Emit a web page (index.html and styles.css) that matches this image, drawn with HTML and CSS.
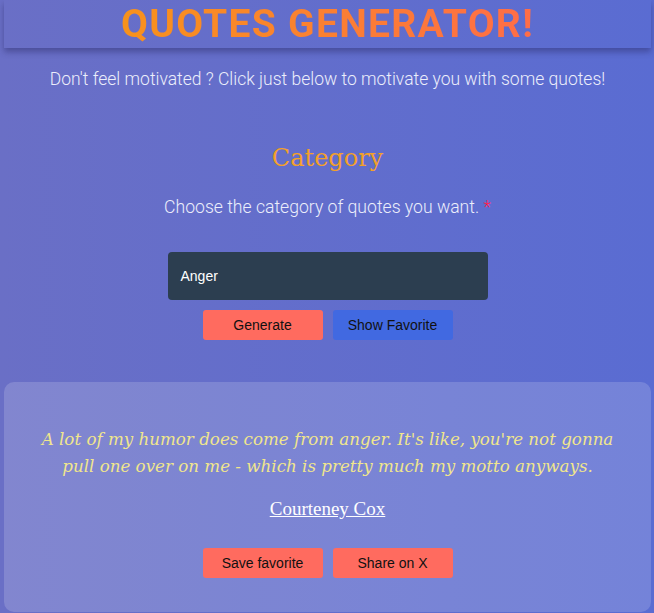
FILE: index.html
```html
<!DOCTYPE html>
<html>
<head>
<meta charset="utf-8">
<link rel="stylesheet" href="styles.css">
</head>
<body>
<div class="page">
  <header class="topbar">
    <h1 class="title">QUOTES GENERATOR!</h1>
  </header>
  <p class="subtitle">Don't feel motivated ? Click just below to motivate you with some quotes!</p>
  <h2 class="category">Category</h2>
  <p class="choose">Choose the category of quotes you want. <span class="req">*</span></p>
  <div class="select">Anger</div>
  <div class="actions">
    <button class="btn btn-red">Generate</button>
    <button class="btn btn-blue">Show Favorite</button>
  </div>
  <section class="card">
    <p class="quote">A lot of my humor does come from anger. It's like, you're not gonna pull one over on me - which is pretty much my motto anyways.</p>
    <a class="author">Courteney Cox</a>
    <div class="actions card-actions">
      <button class="btn btn-red">Save favorite</button>
      <button class="btn btn-red">Share on X</button>
    </div>
  </section>
</div>
</body>
</html>
```
FILE: styles.css
```css
html, body {
  margin: 0;
  padding: 0;
  height: 100%;
}
body {
  background: linear-gradient(to right, #6a6fc6, #5a6cd2);
  font-family: Roboto, "Liberation Sans", sans-serif;
  overflow: hidden;
}
.page {
  padding: 0 3px 0 4px;
  display: flex;
  flex-direction: column;
  align-items: stretch;
}
.topbar {
  height: 48px;
  box-shadow: 0 4px 6px rgba(40, 40, 100, 0.45);
  display: flex;
  justify-content: center;
  align-items: center;
}
.title {
  margin: 0;
  font-family: Roboto, sans-serif;
  font-weight: 700;
  font-size: 39px;
  line-height: 48px;
  letter-spacing: 1.3px;
  background: linear-gradient(to right, #f7921c, #ff6d48);
  -webkit-background-clip: text;
  background-clip: text;
  color: transparent;
}
.subtitle {
  margin: 20px 0 0;
  text-align: center;
  font-weight: 300;
  font-size: 17.5px;
  line-height: 22px;
  color: #eceefb;
}
.category {
  margin: 52px 0 0;
  text-align: center;
  font-family: "DejaVu Serif", serif;
  font-weight: 400;
  font-size: 24px;
  line-height: 32px;
  color: #f3a02a;
}
.choose {
  margin: 22px 0 0;
  text-align: center;
  font-weight: 300;
  font-size: 17.6px;
  line-height: 22px;
  color: #eceefb;
}
.req {
  color: #ff1f4f;
}
.select {
  margin: 34px auto 0;
  width: 320px;
  height: 48px;
  box-sizing: border-box;
  padding: 0 13px;
  display: flex;
  align-items: center;
  background: #2c3e50;
  border-radius: 4px;
  color: #fff;
  font-family: "Liberation Sans", Arial, sans-serif;
  font-size: 14px;
}
.actions {
  margin-top: 10px;
  display: flex;
  justify-content: center;
  gap: 10px;
}
.btn {
  width: 120px;
  height: 30px;
  border: none;
  border-radius: 3px;
  font-family: "Liberation Sans", Arial, sans-serif;
  font-size: 14px;
  color: #111;
  padding: 0;
}
.btn-red {
  background: #ff6b5f;
}
.btn-blue {
  background: #4169e1;
}
.card {
  margin-top: 42px;
  height: 230px;
  box-sizing: border-box;
  padding: 44px 30px 0;
  background: rgba(255, 255, 255, 0.16);
  border-radius: 10px;
  display: flex;
  flex-direction: column;
  align-items: center;
}
.quote {
  margin: 0;
  text-align: center;
  font-family: "DejaVu Serif", serif;
  font-style: italic;
  font-size: 16.7px;
  line-height: 27px;
  color: #f0e68c;
}
.author {
  margin-top: 18px;
  font-family: "Liberation Serif", "Times New Roman", serif;
  font-size: 19px;
  line-height: 22px;
  color: #fff;
  text-decoration: underline;
}
.card-actions {
  margin-top: 28px;
}
```
